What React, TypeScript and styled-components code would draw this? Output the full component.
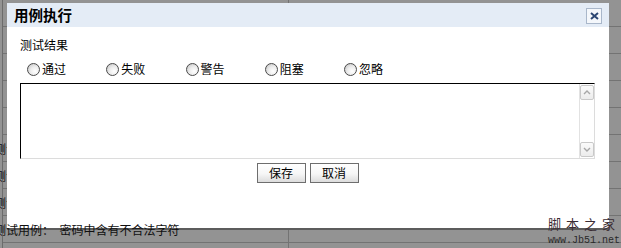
import styled, { createGlobalStyle } from 'styled-components'

const GlobalStyle = createGlobalStyle`
  html, body {
    margin: 0;
    padding: 0;
  }
  body {
    font-family: "Noto Sans CJK SC", "DejaVu Sans", sans-serif;
    font-size: 12px;
    color: #000;
  }
`

const Page = styled.div`
  position: relative;
  width: 621px;
  height: 248px;
  overflow: hidden;
  background: #939393;
`

const BackTable = styled.div`
  margin-left: 2px;
  border-left: 1px solid #6c6c6c;
`

const BackRow = styled.div`
  display: grid;
  grid-template-columns: 285px 1fr;
  height: 26px;
  border-bottom: 1px solid #737373;
`

const BackCell = styled.div<{ $front?: boolean; $first?: boolean }>`
  display: flex;
  align-items: center;
  white-space: pre;
  overflow: visible;
  color: #101010;
  margin-left: ${p => (p.$first ? '-9px' : '0')};
  border-left: ${p => (p.$first ? 'none' : '1px solid #737373')};
  position: ${p => (p.$front ? 'relative' : 'static')};
  z-index: ${p => (p.$front ? 3 : 'auto')};
`

const Dialog = styled.div`
  position: absolute;
  left: 7px;
  top: 3px;
  width: 602px;
  height: 225px;
  z-index: 2;
  background: #fff;
  box-shadow: 0 2px 0 #5c5c5c;
  display: flex;
  flex-direction: column;
`

const TitleBar = styled.div`
  height: 24px;
  background: #e4ecf6;
  display: flex;
  align-items: center;
  justify-content: space-between;
  padding: 0 7px 0 7px;
`

const Title = styled.div`
  font-size: 14.5px;
  font-weight: 700;
  line-height: 16px;
`

const CloseButton = styled.div`
  width: 16px;
  height: 16px;
  box-sizing: border-box;
  border: 1px solid #a9b7ca;
  background: #f4f7fb;
  display: flex;
  align-items: center;
  justify-content: center;
  margin-top: 2px;
`

const Body = styled.div`
  padding: 11px 14px 0 13px;
  display: flex;
  flex-direction: column;
`

const SectionLabel = styled.div`
  line-height: 14px;
  height: 14px;
`

const RadioRow = styled.div`
  display: flex;
  margin-top: 10px;
  padding-left: 7px;
  height: 14px;
`

const RadioItem = styled.label`
  width: 79.25px;
  display: flex;
  align-items: center;
  gap: 2px;
  line-height: 14px;
`

const RadioDot = styled.span`
  width: 13px;
  height: 13px;
  box-sizing: border-box;
  border-radius: 50%;
  border: 1px solid #4a4a4a;
  background: radial-gradient(circle at 65% 65%, #ffffff 0%, #ececec 45%, #bdbdbd 100%);
`

const TextBox = styled.div`
  margin-top: 7px;
  height: 76px;
  box-sizing: border-box;
  border-top: 1px solid #000;
  border-left: 1px solid #000;
  border-right: 1px solid #dcdcdc;
  border-bottom: 1px solid #dcdcdc;
  display: flex;
`

const TextInput = styled.textarea`
  flex: 1;
  border: none;
  outline: none;
  resize: none;
  margin: 0;
  padding: 2px;
  font: inherit;
  background: #fff;
`

const ScrollTrack = styled.div`
  width: 14px;
  border-left: 1px solid #e2e2e2;
  display: flex;
  flex-direction: column;
  justify-content: space-between;
  padding: 1px 0;
`

const ScrollButton = styled.div`
  height: 15px;
  box-sizing: border-box;
  border: 1px solid #c9c9c9;
  border-radius: 2px;
  background: linear-gradient(#fbfbfb, #ececec);
  display: flex;
  align-items: center;
  justify-content: center;
`

const ButtonRow = styled.div`
  display: flex;
  justify-content: center;
  gap: 4px;
  margin-top: 4px;
`

const Button = styled.button`
  width: 49px;
  height: 20px;
  box-sizing: border-box;
  margin: 0;
  padding: 0;
  border: 1px solid #6e6e6e;
  background: linear-gradient(#ffffff 0%, #f6f6f6 55%, #dcdcdc 100%);
  font: inherit;
  font-size: 12px;
  color: #000;
  line-height: 18px;
`

const Watermark = styled.div`
  position: absolute;
  left: 548px;
  top: 216px;
  z-index: 4;
  font-size: 13px;
  line-height: 15px;
  letter-spacing: 5px;
  color: #3a2c34;
`

const WatermarkUrl = styled.div`
  position: absolute;
  left: 548px;
  top: 235px;
  z-index: 4;
  font-family: "Liberation Mono", "DejaVu Sans Mono", monospace;
  font-size: 10px;
  line-height: 12px;
  color: #2a2a2a;
`

const Chevron = ({ up }: { up?: boolean }) => (
  <svg width="8" height="5" viewBox="0 0 8 5">
    <path
      d={up ? 'M1 4 L4 1 L7 4' : 'M1 1 L4 4 L7 1'}
      fill="none"
      stroke="#a7a7a7"
      strokeWidth="1.4"
    />
  </svg>
)

const results = ['通过', '失败', '警告', '阻塞', '忽略']

const rows = [
  '', '', '', '', '',
  '测试用例',
  '测试用例',
  '测试用例',
  '测试用例：  密码中含有不合法字符',
  '',
]

export default function App() {
  return (
    <>
      <GlobalStyle />
      <Page>
        <BackTable>
          {rows.map((text, i) => (
            <BackRow key={i}>
              <BackCell $first $front={i === rows.length - 2}>{text}</BackCell>
              <BackCell />
            </BackRow>
          ))}
        </BackTable>

        <Dialog>
          <TitleBar>
            <Title>用例执行</Title>
            <CloseButton>
              <svg width="9" height="8" viewBox="0 0 9 8">
                <path d="M1 1 L8 7 M8 1 L1 7" stroke="#2b4673" strokeWidth="2" />
              </svg>
            </CloseButton>
          </TitleBar>
          <Body>
            <SectionLabel>测试结果</SectionLabel>
            <RadioRow>
              {results.map(r => (
                <RadioItem key={r}>
                  <RadioDot />
                  {r}
                </RadioItem>
              ))}
            </RadioRow>
            <TextBox>
              <TextInput />
              <ScrollTrack>
                <ScrollButton>
                  <Chevron up />
                </ScrollButton>
                <ScrollButton>
                  <Chevron />
                </ScrollButton>
              </ScrollTrack>
            </TextBox>
            <ButtonRow>
              <Button>保存</Button>
              <Button>取消</Button>
            </ButtonRow>
          </Body>
        </Dialog>

        <Watermark>脚本之家</Watermark>
        <WatermarkUrl>www.Jb51.net</WatermarkUrl>
      </Page>
    </>
  )
}
